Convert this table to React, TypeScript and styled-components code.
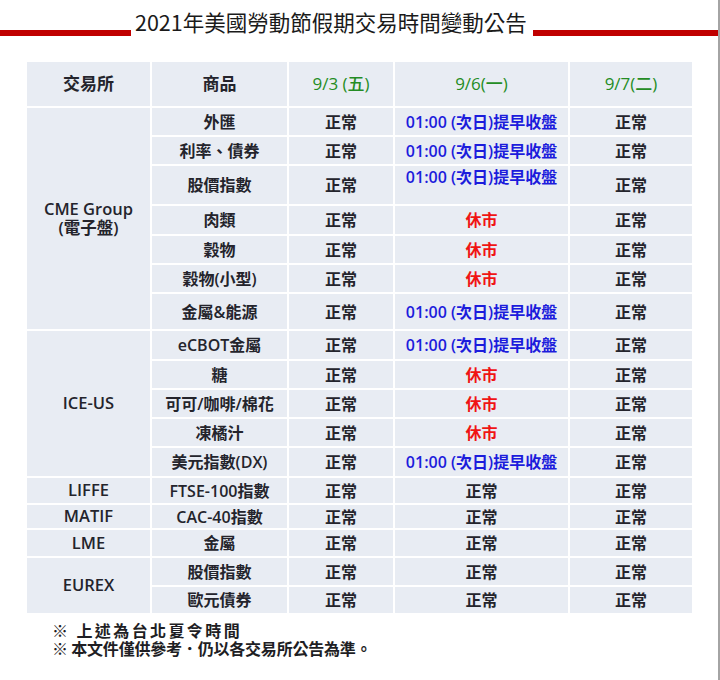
import React from "react";
import styled, { createGlobalStyle } from "styled-components";

type Status = "normal" | "early" | "closed";

interface IRow {
  exchange?: { lines: string[]; span: number };
  product: string;
  days: [Status, Status, Status];
  pitch: number;
  topAlign?: boolean;
}

const GlobalStyle = createGlobalStyle`
  html, body {
    margin: 0;
    padding: 0;
    background: #fff;
  }
  body {
    font-family: "Open Sans", "Noto Sans CJK TC", sans-serif;
    color: #24242c;
  }
`;

const Page = styled.div`
  width: 720px;
  min-height: 680px;
  box-sizing: border-box;
  border-right: 2px solid #a4a4a4;
  padding-top: 8px;
`;

const TitleRow = styled.div`
  display: flex;
  align-items: flex-end;
  gap: 4px;
`;

const RedBar = styled.div<{ $width?: number }>`
  height: 6px;
  background: #c00000;
  ${(p) => (p.$width ? `width: ${p.$width}px;` : "flex: 1;")}
`;

const Title = styled.h1`
  margin: 0 2px 0 0;
  font-family: "Noto Sans CJK TC", sans-serif;
  font-size: 21.5px;
  line-height: 28px;
  font-weight: 400;
  color: #1a1a1a;
  white-space: nowrap;
`;

const Table = styled.table`
  margin: 24px 0 0 25px;
  border-collapse: separate;
  border-spacing: 2px;
  table-layout: fixed;
  width: 669px;
`;

const Row = styled.tr<{ $h: number }>`
  height: ${(p) => p.$h - 2}px;
`;

const HeadCell = styled.th<{ $green?: boolean }>`
  padding: 0;
  background: #e8ecf3;
  font-size: 17px;
  line-height: 22px;
  font-weight: ${(p) => (p.$green ? 500 : 600)};
  color: ${(p) => (p.$green ? "#248c24" : "#24242c")};
  text-align: center;
  vertical-align: middle;
`;

const Cell = styled.td<{ $top?: boolean }>`
  padding: ${(p) => (p.$top ? "1px 0 0" : "0")};
  background: #e8ecf3;
  font-size: 16px;
  line-height: 20px;
  font-weight: 600;
  text-align: center;
  vertical-align: ${(p) => (p.$top ? "top" : "middle")};
  white-space: nowrap;
`;

const ExchangeCell = styled(Cell)`
  font-size: 16.5px;
  line-height: 18.5px;
`;

const StatusText = styled.span<{ $kind: Status }>`
  font-weight: 600;
  color: ${(p) =>
    p.$kind === "early" ? "#1c1cdc" : p.$kind === "closed" ? "#f01414" : "#24242c"};
`;

const Notes = styled.div`
  margin: 6px 0 0 52px;
  font-family: "Noto Sans CJK TC", sans-serif;
  font-size: 16px;
  line-height: 18px;
  font-weight: 700;
  color: #1e1e24;
`;

const Note = styled.div<{ $spacing: number }>`
  letter-spacing: ${(p) => p.$spacing}px;
  white-space: nowrap;
`;

const statusLabel: Record<Status, string> = {
  normal: "正常",
  early: "01:00 (次日)提早收盤",
  closed: "休市",
};

const rows: IRow[] = [
  { exchange: { lines: ["CME Group", "(電子盤)"], span: 7 }, product: "外匯", days: ["normal", "early", "normal"], pitch: 29 },
  { product: "利率、債券", days: ["normal", "early", "normal"], pitch: 29 },
  { product: "股價指數", days: ["normal", "early", "normal"], pitch: 40, topAlign: true },
  { product: "肉類", days: ["normal", "closed", "normal"], pitch: 30 },
  { product: "穀物", days: ["normal", "closed", "normal"], pitch: 29 },
  { product: "穀物(小型)", days: ["normal", "closed", "normal"], pitch: 29 },
  { product: "金屬&能源", days: ["normal", "early", "normal"], pitch: 37 },
  { exchange: { lines: ["ICE-US"], span: 5 }, product: "eCBOT金屬", days: ["normal", "early", "normal"], pitch: 30 },
  { product: "糖", days: ["normal", "closed", "normal"], pitch: 29 },
  { product: "可可/咖啡/棉花", days: ["normal", "closed", "normal"], pitch: 29 },
  { product: "凍橘汁", days: ["normal", "closed", "normal"], pitch: 29 },
  { product: "美元指數(DX)", days: ["normal", "early", "normal"], pitch: 30 },
  { exchange: { lines: ["LIFFE"], span: 1 }, product: "FTSE-100指數", days: ["normal", "normal", "normal"], pitch: 27 },
  { exchange: { lines: ["MATIF"], span: 1 }, product: "CAC-40指數", days: ["normal", "normal", "normal"], pitch: 25 },
  { exchange: { lines: ["LME"], span: 1 }, product: "金屬", days: ["normal", "normal", "normal"], pitch: 28 },
  { exchange: { lines: ["EUREX"], span: 2 }, product: "股價指數", days: ["normal", "normal", "normal"], pitch: 29 },
  { product: "歐元債券", days: ["normal", "normal", "normal"], pitch: 28 },
];

const colWidths = [123, 135, 104, 173, 122];

export default function App() {
  return (
    <>
      <GlobalStyle />
      <Page>
        <TitleRow>
          <RedBar $width={131} />
          <Title>2021年美國勞動節假期交易時間變動公告</Title>
          <RedBar />
        </TitleRow>

        <Table>
          <colgroup>
            {colWidths.map((w, i) => (
              <col key={i} style={{ width: w }} />
            ))}
          </colgroup>
          <thead>
            <Row $h={46}>
              <HeadCell>交易所</HeadCell>
              <HeadCell>商品</HeadCell>
              <HeadCell $green>9/3 (五)</HeadCell>
              <HeadCell $green>9/6(一)</HeadCell>
              <HeadCell $green>9/7(二)</HeadCell>
            </Row>
          </thead>
          <tbody>
            {rows.map((row, i) => (
              <Row key={i} $h={row.pitch}>
                {row.exchange && (
                  <ExchangeCell rowSpan={row.exchange.span}>
                    {row.exchange.lines.map((l) => (
                      <div key={l}>{l}</div>
                    ))}
                  </ExchangeCell>
                )}
                <Cell>{row.product}</Cell>
                {row.days.map((d, j) => (
                  <Cell key={j} $top={row.topAlign && d === "early"}>
                    <StatusText $kind={d}>{statusLabel[d]}</StatusText>
                  </Cell>
                ))}
              </Row>
            ))}
          </tbody>
        </Table>

        <Notes>
          <Note $spacing={2.4}>※ 上述為台北夏令時間</Note>
          <Note $spacing={-0.2}>※ 本文件僅供參考．仍以各交易所公告為準。</Note>
        </Notes>
      </Page>
    </>
  );
}
